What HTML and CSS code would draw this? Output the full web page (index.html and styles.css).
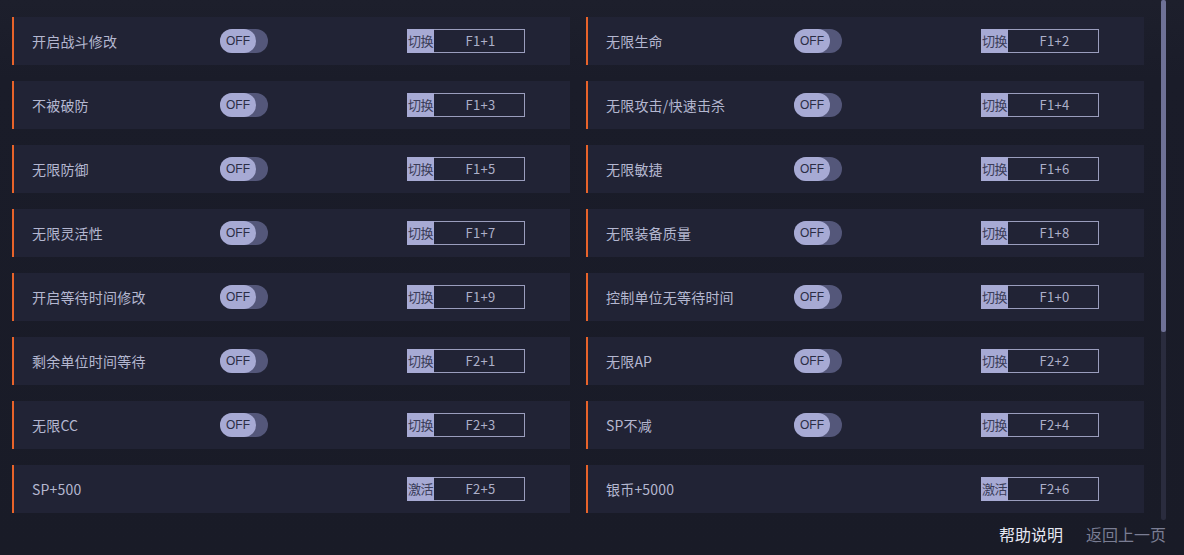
FILE: index.html
```html
<!DOCTYPE html>
<html lang="zh-CN">
<head>
<meta charset="utf-8">
<title>修改器</title>
<link rel="stylesheet" href="styles.css">
</head>
<body>
<div class="page">
  <div class="main">
    <div class="list">
      <div class="card"><span class="label">开启战斗修改</span><span class="toggle"><span class="knob">OFF</span></span><span class="hotkey"><span class="act">切换</span><span class="key">F1+1</span></span></div>
      <div class="card"><span class="label">无限生命</span><span class="toggle"><span class="knob">OFF</span></span><span class="hotkey"><span class="act">切换</span><span class="key">F1+2</span></span></div>
      <div class="card"><span class="label">不被破防</span><span class="toggle"><span class="knob">OFF</span></span><span class="hotkey"><span class="act">切换</span><span class="key">F1+3</span></span></div>
      <div class="card"><span class="label">无限攻击/快速击杀</span><span class="toggle"><span class="knob">OFF</span></span><span class="hotkey"><span class="act">切换</span><span class="key">F1+4</span></span></div>
      <div class="card"><span class="label">无限防御</span><span class="toggle"><span class="knob">OFF</span></span><span class="hotkey"><span class="act">切换</span><span class="key">F1+5</span></span></div>
      <div class="card"><span class="label">无限敏捷</span><span class="toggle"><span class="knob">OFF</span></span><span class="hotkey"><span class="act">切换</span><span class="key">F1+6</span></span></div>
      <div class="card"><span class="label">无限灵活性</span><span class="toggle"><span class="knob">OFF</span></span><span class="hotkey"><span class="act">切换</span><span class="key">F1+7</span></span></div>
      <div class="card"><span class="label">无限装备质量</span><span class="toggle"><span class="knob">OFF</span></span><span class="hotkey"><span class="act">切换</span><span class="key">F1+8</span></span></div>
      <div class="card"><span class="label">开启等待时间修改</span><span class="toggle"><span class="knob">OFF</span></span><span class="hotkey"><span class="act">切换</span><span class="key">F1+9</span></span></div>
      <div class="card"><span class="label">控制单位无等待时间</span><span class="toggle"><span class="knob">OFF</span></span><span class="hotkey"><span class="act">切换</span><span class="key">F1+0</span></span></div>
      <div class="card"><span class="label">剩余单位时间等待</span><span class="toggle"><span class="knob">OFF</span></span><span class="hotkey"><span class="act">切换</span><span class="key">F2+1</span></span></div>
      <div class="card"><span class="label">无限AP</span><span class="toggle"><span class="knob">OFF</span></span><span class="hotkey"><span class="act">切换</span><span class="key">F2+2</span></span></div>
      <div class="card"><span class="label">无限CC</span><span class="toggle"><span class="knob">OFF</span></span><span class="hotkey"><span class="act">切换</span><span class="key">F2+3</span></span></div>
      <div class="card"><span class="label">SP不减</span><span class="toggle"><span class="knob">OFF</span></span><span class="hotkey"><span class="act">切换</span><span class="key">F2+4</span></span></div>
      <div class="card"><span class="label">SP+500</span><span class="spacer"></span><span class="hotkey"><span class="act">激活</span><span class="key">F2+5</span></span></div>
      <div class="card"><span class="label">银币+5000</span><span class="spacer"></span><span class="hotkey"><span class="act">激活</span><span class="key">F2+6</span></span></div>
    </div>
    <div class="scrollbar"><div class="thumb"></div></div>
  </div>
  <div class="footer">
    <a class="link help">帮助说明</a>
    <a class="link back">返回上一页</a>
  </div>
</div>
</body>
</html>
```

FILE: styles.css
```css
* { box-sizing: border-box; }
html, body { margin: 0; padding: 0; }
body {
  width: 1184px;
  height: 555px;
  overflow: hidden;
  background: linear-gradient(180deg, #1d1f2c 0px, #1a1c29 80px, #191b27 555px);
  font-family: "Noto Sans CJK SC", "Noto Sans", sans-serif;
  color: #b3b6cf;
}
.page {
  display: flex;
  flex-direction: column;
  height: 555px;
}
.main {
  display: flex;
  align-items: flex-start;
  padding-left: 12px;
  height: 520px;
}
.list {
  display: grid;
  grid-template-columns: 558px 558px;
  column-gap: 16px;
  row-gap: 16px;
  padding-top: 17px;
}
.card {
  height: 48px;
  background: #212335;
  border-left: 2px solid #e8632a;
  display: flex;
  align-items: center;
  padding-left: 18px;
}
.label {
  width: 188px;
  font-size: 14px;
  color: #b4b7d0;
  white-space: nowrap;
  letter-spacing: 0.2px;
}
.toggle {
  width: 48px;
  height: 24px;
  border-radius: 12px;
  background: #54577a;
  display: flex;
}
.knob {
  width: 36px;
  height: 24px;
  border-radius: 12px;
  background: #a7aad4;
  color: #2b2d45;
  font-family: "Liberation Sans", Arial, sans-serif;
  font-size: 12px;
  line-height: 25px;
  text-align: center;
}
.spacer { width: 48px; height: 24px; }
.hotkey {
  margin-left: 139px;
  display: flex;
  height: 24px;
  width: 118px;
  border: 1px solid #9a9dbd;
}
.act {
  width: 27px;
  margin: -1px 0 -1px -1px;
  background: #a7aad4;
  color: #3a3c58;
  font-size: 13px;
  line-height: 24px;
  text-align: center;
  letter-spacing: -0.5px;
  white-space: nowrap;
}
.key {
  flex: 1;
  text-align: center;
  font-size: 13px;
  line-height: 22px;
  letter-spacing: 0.3px;
  color: #adb0c9;
  padding-left: 3px;
}
.scrollbar {
  margin-left: 17px;
  width: 5px;
  height: 520px;
  background: #2a2c3e;
  border-radius: 2px;
  display: flex;
  flex-direction: column;
}
.thumb {
  height: 332px;
  background: #6e7196;
  border-radius: 2px;
}
.footer {
  display: flex;
  justify-content: flex-end;
  gap: 23px;
  padding-right: 18px;
  padding-top: 3px;
}
.link {
  font-size: 16px;
  line-height: 22px;
  cursor: pointer;
}
.help { color: #e6e7f2; }
.back { color: #7a7d93; }
```
